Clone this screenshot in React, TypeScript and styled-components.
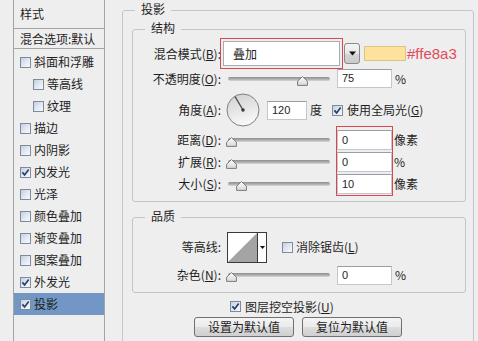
import { FC, ReactNode } from "react";
import styled, { createGlobalStyle } from "styled-components";

const UI_FONT = `"Noto Sans CJK SC", "Noto Sans", sans-serif`;
const NUM_FONT = `"Liberation Sans", Arial, sans-serif`;
const BG = "#eeeeee";
const GROUP_LINE = "#c2c6ca";
const SIDE_LINE = "#a4a4a4";
const MARK_RED = "#d9474f";

const GlobalStyle = createGlobalStyle`
  html, body {
    margin: 0;
    padding: 0;
    background: ${BG};
  }
  body {
    font-family: ${UI_FONT};
    font-size: 12px;
    color: #1e1e1e;
  }
  u {
    text-underline-offset: 1px;
  }
`;

const Page = styled.div`
  display: flex;
  width: 478px;
  height: 341px;
  overflow: hidden;
  background: ${BG};
`;

/* ---------- left style list ---------- */

const Sidebar = styled.div`
  margin-left: 13px;
  width: 92px;
  flex-shrink: 0;
  box-sizing: border-box;
  border-left: 1px solid ${SIDE_LINE};
  border-right: 1px solid ${SIDE_LINE};
  display: flex;
  flex-direction: column;
`;

const SideHead = styled.div<{ $h: number }>`
  height: ${({ $h }) => $h}px;
  border-bottom: 1px solid ${SIDE_LINE};
  display: flex;
  align-items: center;
  padding-left: 6px;
  white-space: nowrap;
  line-height: 1;
`;

const SideList = styled.div`
  padding-top: 2px;
  display: flex;
  flex-direction: column;
`;

const SideItem = styled.div<{ $sub?: boolean; $selected?: boolean }>`
  height: 22px;
  display: flex;
  align-items: center;
  gap: 3px;
  padding-left: ${({ $sub }) => ($sub ? 19 : 6)}px;
  background: ${({ $selected }) => ($selected ? "#7297c4" : "transparent")};
  white-space: nowrap;
  line-height: 1;
`;

const CheckBox = styled.span`
  width: 11px;
  height: 11px;
  flex-shrink: 0;
  box-sizing: border-box;
  border: 1px solid #7d8ba0;
  background: linear-gradient(135deg, #c3cfde 0%, #e4eaf2 55%, #f8fafc 100%);
  display: inline-flex;
  align-items: center;
  justify-content: center;
`;

const Check: FC<{ checked?: boolean }> = ({ checked }) => (
  <CheckBox>
    {checked && (
      <svg width="9" height="9" viewBox="0 0 9 9">
        <path d="M1.4 4.4 L3.6 6.9 L7.7 1.5" fill="none" stroke="#2b3f6e" strokeWidth="1.7" />
      </svg>
    )}
  </CheckBox>
);

/* ---------- right settings ---------- */

const Main = styled.div`
  flex: 1;
  padding-left: 17px;
`;

const Group = styled.fieldset<{ $mt?: number; $ml?: number; $mr?: number; $pb?: number }>`
  margin: ${({ $mt = 0, $ml = 0, $mr = 0 }) => `${$mt}px ${$mr}px 0 ${$ml}px`};
  padding: 0 0 ${({ $pb = 0 }) => $pb}px 0;
  border: 1px solid ${GROUP_LINE};
  border-radius: 3px;
  min-width: 0;
  box-sizing: border-box;
`;

const Outer = styled(Group)`
  width: 352px;
`;

const Legend = styled.legend`
  margin-left: 12px;
  padding: 0 6px 3px;
  font-size: 12px;
  line-height: 14px;
`;

const Row = styled.div<{ $h: number; $mt?: number }>`
  display: flex;
  align-items: center;
  height: ${({ $h }) => $h}px;
  margin-top: ${({ $mt = 0 }) => $mt}px;
  white-space: nowrap;
`;

const Label = styled.span`
  width: 88px;
  flex-shrink: 0;
  text-align: right;
  line-height: 1;
`;

const Gap = styled.span<{ $w: number }>`
  display: inline-block;
  width: ${({ $w }) => $w}px;
  flex-shrink: 0;
`;

const RedMark = styled.div`
  box-sizing: border-box;
  border: 1px solid ${MARK_RED};
`;

const SelectMark = styled(RedMark)`
  margin-left: -1px;
  width: 123px;
  height: 31px;
  padding: 2px;
`;

const SelectField = styled.div`
  height: 100%;
  box-sizing: border-box;
  background: #fff;
  border: 1px solid #a7adb5;
  display: flex;
  align-items: center;
  padding-left: 9px;
`;

const DropButton = styled.div`
  width: 16px;
  height: 21px;
  margin-left: 1px;
  box-sizing: border-box;
  border: 1px solid #8a8a8a;
  border-radius: 3px;
  background: linear-gradient(#f6f6f6, #e6e6e6 50%, #d4d4d4 51%, #cbcbcb);
  display: flex;
  align-items: center;
  justify-content: center;
`;

const Swatch = styled.div<{ $color: string }>`
  width: 42px;
  height: 15px;
  margin-left: 4px;
  box-sizing: border-box;
  background: ${({ $color }) => $color};
  border: 1px solid #d9c58c;
`;

const HexNote = styled.span`
  margin-left: 1px;
  font-family: ${NUM_FONT};
  font-size: 15px;
  color: #e14a5b;
  line-height: 1;
`;

const SliderBox = styled.div<{ $h: number }>`
  position: relative;
  width: 102px;
  height: ${({ $h }) => $h}px;
  flex-shrink: 0;
`;

const Track = styled.div<{ $top: number }>`
  margin-top: ${({ $top }) => $top}px;
  height: 4px;
  border-radius: 2px;
  background: linear-gradient(#8c8c8c, #b4b4b4 60%, #d8d8d8);
`;

const Thumb = styled.svg`
  position: absolute;
`;

const Slider: FC<{ at: number; h: number }> = ({ at, h }) => {
  const center = Math.round(h / 2);
  return (
    <SliderBox $h={h}>
      <Track $top={center - 2} />
      <Thumb
        width="11"
        height="10"
        viewBox="0 0 11 10"
        style={{ left: at - 5.5, top: center - 3 }}
      >
        <defs>
          <linearGradient id="thumbFill" x1="0" y1="0" x2="0" y2="1">
            <stop offset="0" stopColor="#ffffff" />
            <stop offset="1" stopColor="#d6d6d6" />
          </linearGradient>
        </defs>
        <path
          d="M5.5 0.6 L10.4 5.2 L10.4 9.4 L0.6 9.4 L0.6 5.2 Z"
          fill="url(#thumbFill)"
          stroke="#7a7a7a"
        />
      </Thumb>
    </SliderBox>
  );
};

const TextBox = styled.div<{ $w: number; $h: number }>`
  width: ${({ $w }) => $w}px;
  height: ${({ $h }) => $h}px;
  flex-shrink: 0;
  box-sizing: border-box;
  background: #fff;
  border: 1px solid #c2c7cd;
  border-top-color: #989ea5;
  padding-left: 4px;
  display: flex;
  align-items: center;
  font-family: ${NUM_FONT};
  font-size: 11px;
  line-height: 1;
`;

const Unit = styled.span<{ $ml?: number }>`
  margin-left: ${({ $ml = 2 }) => $ml}px;
  line-height: 1;
`;

const MetricBlock = styled.div`
  display: flex;
  align-items: flex-start;
  margin-top: 2px;
  white-space: nowrap;
`;

const Column = styled.div`
  display: flex;
  flex-direction: column;
  flex-shrink: 0;
`;

const Cell = styled.div`
  height: 22px;
  display: flex;
  align-items: center;
`;

const InputMark = styled(RedMark)`
  width: 57px;
  margin-top: -3px;
  padding-top: 2px;
  display: flex;
  flex-direction: column;
`;

const Contour = styled.div`
  width: 40px;
  height: 31px;
  flex-shrink: 0;
  box-sizing: border-box;
  border: 1px solid #3a3a3a;
  background: #fff;
  display: flex;
`;

const ContourArrow = styled.div`
  flex: 1;
  border-left: 1px solid #3a3a3a;
  display: flex;
  align-items: center;
  justify-content: center;
`;

const OptionRow = styled.div`
  display: flex;
  align-items: center;
  gap: 4px;
  height: 13px;
  margin-top: 7px;
  padding-left: 107px;
  white-space: nowrap;
  line-height: 1;
`;

const ButtonRow = styled.div`
  display: flex;
  justify-content: center;
  gap: 8px;
  margin-top: 4px;
`;

const PushButton = styled.button`
  width: 100px;
  height: 20px;
  padding: 0;
  box-sizing: border-box;
  border: 1px solid #707070;
  border-radius: 3px;
  background: linear-gradient(#f4f4f4 0%, #ebebeb 48%, #dddddd 52%, #cfcfcf 100%);
  font-family: ${UI_FONT};
  font-size: 12px;
  line-height: 18px;
  color: #1e1e1e;
`;

const Down: FC<{ w?: number }> = ({ w = 7 }) => (
  <svg width={w} height={Math.ceil(w * 0.6)} viewBox="0 0 10 6">
    <polygon points="0,0 10,0 5,6" fill="#111" />
  </svg>
);

const Dial: FC = () => (
  <svg width="34" height="34" viewBox="0 0 34 34">
    <defs>
      <linearGradient id="dialFill" x1="0.3" y1="0" x2="0.6" y2="1">
        <stop offset="0" stopColor="#d2d2d2" />
        <stop offset="1" stopColor="#fbfbfb" />
      </linearGradient>
    </defs>
    <circle cx="17" cy="17" r="16" fill="url(#dialFill)" stroke="#808080" />
    <line x1="17" y1="17" x2="9" y2="3.5" stroke="#444" strokeWidth="1.3" />
    <circle cx="17" cy="17" r="1.7" fill="#333" />
  </svg>
);

const Key: FC<{ children: ReactNode }> = ({ children }) => <u>{children}</u>;

const styles: { name: string; sub?: boolean; checked?: boolean; selected?: boolean }[] = [
  { name: "斜面和浮雕" },
  { name: "等高线", sub: true },
  { name: "纹理", sub: true },
  { name: "描边" },
  { name: "内阴影" },
  { name: "内发光", checked: true },
  { name: "光泽" },
  { name: "颜色叠加" },
  { name: "渐变叠加" },
  { name: "图案叠加" },
  { name: "外发光", checked: true },
  { name: "投影", checked: true, selected: true },
];

const metrics = [
  { label: "距离", key: "D", value: "0", unit: "像素", at: 3 },
  { label: "扩展", key: "R", value: "0", unit: "%", at: 3 },
  { label: "大小", key: "S", value: "10", unit: "像素", at: 13 },
];

export default function App() {
  return (
    <Page>
      <GlobalStyle />
      <Sidebar>
        <SideHead $h={28}>样式</SideHead>
        <SideHead $h={19}>混合选项:默认</SideHead>
        <SideList>
          {styles.map((s) => (
            <SideItem key={s.name} $sub={s.sub} $selected={s.selected}>
              <Check checked={s.checked} />
              {s.name}
            </SideItem>
          ))}
        </SideList>
      </Sidebar>

      <Main>
        <Outer $mt={2} $pb={30}>
          <Legend>投影</Legend>

          <Group $mt={2} $ml={9} $mr={7} $pb={5}>
            <Legend>结构</Legend>
            <Row $h={31}>
              <Label>
                混合模式(<Key>B</Key>):
              </Label>
              <SelectMark>
                <SelectField>叠加</SelectField>
              </SelectMark>
              <DropButton>
                <Down />
              </DropButton>
              <Swatch $color="#fee29b" />
              <HexNote>#ffe8a3</HexNote>
            </Row>

            <Row $h={19}>
              <Label>
                不透明度(<Key>O</Key>):
              </Label>
              <Gap $w={7} />
              <Slider at={74} h={19} />
              <Gap $w={7} />
              <TextBox $w={55} $h={19}>75</TextBox>
              <Unit $ml={3}>%</Unit>
            </Row>

            <Row $h={34} $mt={5}>
              <Label>
                角度(<Key>A</Key>):
              </Label>
              <Gap $w={5} />
              <Dial />
              <Gap $w={7} />
              <TextBox $w={40} $h={19}>120</TextBox>
              <Unit $ml={3}>度</Unit>
              <Gap $w={10} />
              <Check checked />
              <Unit $ml={4}>
                使用全局光(<Key>G</Key>)
              </Unit>
            </Row>

            <MetricBlock>
              <Column>
                {metrics.map((m) => (
                  <Cell key={m.label}>
                    <Label>
                      {m.label}(<Key>{m.key}</Key>):
                    </Label>
                  </Cell>
                ))}
              </Column>
              <Gap $w={7} />
              <Column>
                {metrics.map((m) => (
                  <Cell key={m.label}>
                    <Slider at={m.at} h={22} />
                  </Cell>
                ))}
              </Column>
              <Gap $w={6} />
              <InputMark>
                {metrics.map((m) => (
                  <Cell key={m.label}>
                    <TextBox $w={55} $h={20}>
                      {m.value}
                    </TextBox>
                  </Cell>
                ))}
              </InputMark>
              <Column>
                {metrics.map((m) => (
                  <Cell key={m.label}>
                    <Unit $ml={1}>{m.unit}</Unit>
                  </Cell>
                ))}
              </Column>
            </MetricBlock>
          </Group>

          <Group $mt={7} $ml={9} $mr={7} $pb={7}>
            <Legend>品质</Legend>
            <Row $h={32} $mt={5}>
              <Label>等高线:</Label>
              <Gap $w={6} />
              <Contour>
                <svg width="29" height="29" viewBox="0 0 29 29">
                  <polygon points="0,29 29,0 29,29" fill="#a4a4a4" />
                </svg>
                <ContourArrow>
                  <Down w={5} />
                </ContourArrow>
              </Contour>
              <Gap $w={15} />
              <Check />
              <Unit $ml={3}>
                消除锯齿(<Key>L</Key>)
              </Unit>
            </Row>
            <Row $h={20} $mt={2}>
              <Label>
                杂色(<Key>N</Key>):
              </Label>
              <Gap $w={7} />
              <Slider at={3} h={20} />
              <Gap $w={7} />
              <TextBox $w={55} $h={19}>0</TextBox>
              <Unit $ml={3}>%</Unit>
            </Row>
          </Group>

          <OptionRow>
            <Check checked />
            <span>
              图层挖空投影(<Key>U</Key>)
            </span>
          </OptionRow>

          <ButtonRow>
            <PushButton>设置为默认值</PushButton>
            <PushButton>复位为默认值</PushButton>
          </ButtonRow>
        </Outer>
      </Main>
    </Page>
  );
}
